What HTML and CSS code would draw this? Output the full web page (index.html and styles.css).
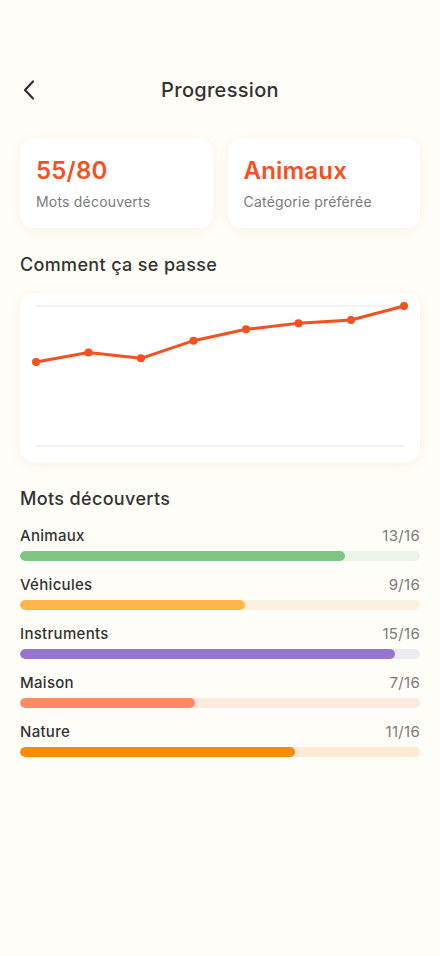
FILE: index.html
```html
<!DOCTYPE html>
<html lang="fr">
<head>
<meta charset="utf-8">
<title>Progression</title>
<link rel="stylesheet" href="styles.css">
</head>
<body>
<div class="page">
  <header class="topbar">
    <button class="back" aria-label="Retour">
      <svg width="14" height="20" viewBox="0 0 14 20"><path d="M11 1.5 L3 10 L11 18.5" fill="none" stroke="#2f2f2f" stroke-width="2.2" stroke-linecap="round" stroke-linejoin="round"/></svg>
    </button>
    <h1 class="title">Progression</h1>
  </header>

  <section class="stats">
    <div class="card stat">
      <div class="stat-value">55/80</div>
      <div class="stat-label">Mots découverts</div>
    </div>
    <div class="card stat">
      <div class="stat-value">Animaux</div>
      <div class="stat-label">Catégorie préférée</div>
    </div>
  </section>

  <h2 class="section-title">Comment ça se passe</h2>
  <div class="card chart">
    <svg width="400" height="169" viewBox="0 0 400 169">
      <line x1="16" y1="13" x2="384" y2="13" stroke="#eeeff2" stroke-width="1.5"/>
      <line x1="16" y1="153" x2="384" y2="153" stroke="#eeeff2" stroke-width="1.5"/>
      <polyline fill="none" stroke="#f4511e" stroke-width="3" stroke-linejoin="round" stroke-linecap="round"
        points="16,69 68.5,59.5 121,65.3 173.5,47.7 226,36.3 278.5,30.3 331,27 384,13"/>
      <g fill="#f4511e">
        <circle cx="16" cy="69" r="4"/>
        <circle cx="68.5" cy="59.5" r="4"/>
        <circle cx="121" cy="65.3" r="4"/>
        <circle cx="173.5" cy="47.7" r="4"/>
        <circle cx="226" cy="36.3" r="4"/>
        <circle cx="278.5" cy="30.3" r="4"/>
        <circle cx="331" cy="27" r="4"/>
        <circle cx="384" cy="13" r="4"/>
      </g>
    </svg>
  </div>

  <h2 class="section-title words-title">Mots découverts</h2>
  <div class="bars">
    <div class="bar-row">
      <div class="bar-head"><span class="bar-name">Animaux</span><span class="bar-count">13/16</span></div>
      <div class="track green"><div class="fill" style="width:81.25%"></div></div>
    </div>
    <div class="bar-row">
      <div class="bar-head"><span class="bar-name">Véhicules</span><span class="bar-count">9/16</span></div>
      <div class="track amber"><div class="fill" style="width:56.25%"></div></div>
    </div>
    <div class="bar-row">
      <div class="bar-head"><span class="bar-name">Instruments</span><span class="bar-count">15/16</span></div>
      <div class="track purple"><div class="fill" style="width:93.75%"></div></div>
    </div>
    <div class="bar-row">
      <div class="bar-head"><span class="bar-name">Maison</span><span class="bar-count">7/16</span></div>
      <div class="track salmon"><div class="fill" style="width:43.75%"></div></div>
    </div>
    <div class="bar-row">
      <div class="bar-head"><span class="bar-name">Nature</span><span class="bar-count">11/16</span></div>
      <div class="track orange"><div class="fill" style="width:68.75%"></div></div>
    </div>
  </div>
</div>
</body>
</html>
```

FILE: styles.css
```css
* { box-sizing: border-box; }
html, body { margin: 0; padding: 0; }
body {
  background: #fffdf7;
  font-family: Inter, "Noto Sans", "Liberation Sans", sans-serif;
  color: #333333;
  width: 440px;
  min-height: 956px;
}
.page {
  padding: 70px 20px 0 20px;
}
.topbar {
  position: relative;
  height: 40px;
  display: flex;
  align-items: center;
  justify-content: center;
}
.back {
  position: absolute;
  left: 0;
  top: 10px;
  width: 20px;
  height: 20px;
  padding: 0 0 0 2px;
  border: 0;
  background: transparent;
  display: flex;
  align-items: center;
}
.title {
  margin: 0;
  font-size: 20px;
  font-weight: 500;
  letter-spacing: 0.3px;
  line-height: 40px;
  color: #333333;
}
.stats {
  margin-top: 28px;
  display: flex;
  gap: 15px;
}
.card {
  background: #ffffff;
  border-radius: 14px;
  box-shadow: 0 2px 12px rgba(120, 100, 60, 0.07);
}
.stat {
  flex: 1;
  padding: 18px 16px 16px 16px;
}
.stat-value {
  font-size: 24px;
  font-weight: 600;
  letter-spacing: 0.2px;
  line-height: 30px;
  color: #f4511e;
}
.stat-label {
  margin-top: 6px;
  font-size: 14px;
  line-height: 20px;
  letter-spacing: 0.2px;
  color: #7a7a7a;
}
.section-title {
  margin: 25px 0 0 0;
  font-size: 18px;
  font-weight: 500;
  letter-spacing: 0.35px;
  line-height: 24px;
  color: #333333;
}
.chart {
  margin-top: 16px;
  height: 169px;
  overflow: hidden;
}
.chart svg { display: block; }
.words-title { margin-top: 25px; }
.bars {
  margin-top: 15px;
  display: flex;
  flex-direction: column;
  gap: 14.5px;
}
.bar-head {
  display: flex;
  justify-content: space-between;
  align-items: center;
  line-height: 20px;
  font-size: 15px;
  letter-spacing: 0.3px;
}
.bar-name { font-weight: 500; color: #333333; }
.bar-count { color: #7a7a7a; }
.track {
  margin-top: 4.5px;
  height: 10px;
  border-radius: 5px;
  overflow: hidden;
}
.fill { height: 100%; border-radius: 5px; }
.green { background: #ecf3e9; }
.green .fill { background: #7dc683; }
.amber { background: #fdf0dc; }
.amber .fill { background: #ffb74d; }
.purple { background: #ecebf0; }
.purple .fill { background: #9575cd; }
.salmon { background: #fde9dd; }
.salmon .fill { background: #ff8a65; }
.orange { background: #fdebd3; }
.orange .fill { background: #fb8c00; }
```
